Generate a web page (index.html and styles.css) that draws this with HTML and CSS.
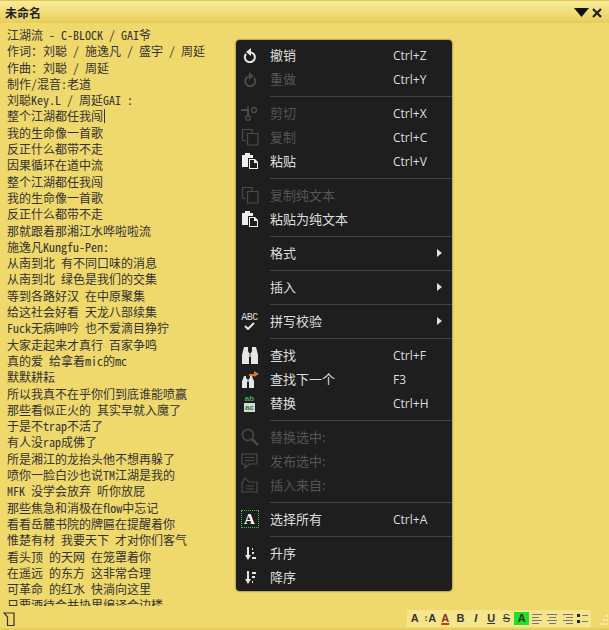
FILE: index.html
```html
<!DOCTYPE html>
<html>
<head>
<meta charset="utf-8">
<title>未命名</title>
<link rel="stylesheet" href="styles.css">
</head>
<body>
<svg class="defs" width="0" height="0">
	<symbol id="i-copy" viewBox="0 0 18 18">
		<path d="M1.500 12V1.500h9.500V5M5 12.500H1.500M6.500 5.500h10.500v11.500H6.500zM6.500 5.500v7" fill="none" stroke="currentColor" stroke-width="1.200"/>
	</symbol>
	<symbol id="i-paste" viewBox="0 0 18 18">
		<path d="M1 3h3V1h5v2h3v3H7v9H1z" fill="currentColor"/>
		<path d="M8 7h6l3 3v7H8z" fill="currentColor"/>
		<path d="M9 8h4v3h3v5H9z" fill="#1e1e1e"/>
	</symbol>
</svg>

<div class="note">
	<div class="titlebar">
		<span class="title">未命名</span>
		<span class="win-btns">
			<svg width="15" height="9" viewBox="0 0 15 9"><path d="M0 0h15L7.500 9z" fill="#111"/></svg>
			<svg width="10" height="10" viewBox="0 0 10 10"><path d="M1 1l8 8M9 1L1 9" stroke="#222" stroke-width="2.200"/></svg>
		</span>
	</div>

	<div class="content">
		<div class="lyrics">
			<div>江湖流 - C-BLOCK / GAI爷</div>
			<div>作词：刘聪 / 施逸凡 / 盛宇 / 周延</div>
			<div>作曲：刘聪 / 周延</div>
			<div>制作/混音:老道</div>
			<div>刘聪Key.L / 周延GAI :</div>
			<div>整个江湖都任我闯<span class="caret"></span></div>
			<div>我的生命像一首歌</div>
			<div>反正什么都带不走</div>
			<div>因果循环在道中流</div>
			<div>整个江湖都任我闯</div>
			<div>我的生命像一首歌</div>
			<div>反正什么都带不走</div>
			<div>那就跟着那湘江水哗啦啦流</div>
			<div>施逸凡Kungfu-Pen:</div>
			<div>从南到北 有不同口味的消息</div>
			<div>从南到北 绿色是我们的交集</div>
			<div>等到各路好汉 在中原聚集</div>
			<div>给这社会好看 天龙八部续集</div>
			<div>Fuck无病呻吟 也不爱滴目狰狞</div>
			<div>大家走起来才真行 百家争鸣</div>
			<div>真的爱 给拿着mic的mc</div>
			<div>默默耕耘</div>
			<div>所以我真不在乎你们到底谁能喷赢</div>
			<div>那些看似正火的 其实早就入魔了</div>
			<div>于是不trap不活了</div>
			<div>有人没rap成佛了</div>
			<div>所是湘江的龙抬头他不想再躲了</div>
			<div>喷你一脸白沙也说TM江湖是我的</div>
			<div>MFK 没学会放弃 听你放屁</div>
			<div>那些焦急和消极在flow中忘记</div>
			<div>看看岳麓书院的牌匾在提醒着你</div>
			<div>惟楚有材 我要天下 才对你们客气</div>
			<div>看头顶 的天网 在笼罩着你</div>
			<div>在遥远 的东方 这非常合理</div>
			<div>可革命 的红水 快淌向这里</div>
			<div>只要酒待会并协里编译合边楼</div>
		</div>

		<div class="menu">
			<div class="item">
				<span class="ico"><svg width="14" height="15" viewBox="0 0 14 15"><path d="M3 6a5 5 0 1 0 4-1.800" fill="none" stroke="#e6e6e6" stroke-width="2"/><path d="M8 0v8L3 4z" fill="#e6e6e6"/></svg></span>
				<span class="label">撤销</span><span class="keys">Ctrl+Z</span>
			</div>
			<div class="item off">
				<span class="ico"><svg width="14" height="15" viewBox="0 0 14 15"><path d="M11 6a5 5 0 1 1-4-1.800" fill="none" stroke="#4a4a4a" stroke-width="2"/><path d="M6 0v8l5-4z" fill="#4a4a4a"/></svg></span>
				<span class="label">重做</span><span class="keys">Ctrl+Y</span>
			</div>
			<div class="sep"></div>
			<div class="item off">
				<span class="ico"><svg width="17" height="16" viewBox="0 0 17 16"><path d="M0 5h8M7 5v6" fill="none" stroke="#4a4a4a" stroke-width="2"/><circle cx="7" cy="13" r="2.300" fill="none" stroke="#4a4a4a" stroke-width="1.400"/><circle cx="13" cy="5" r="2.500" fill="none" stroke="#4a4a4a" stroke-width="1.400"/><path d="M7 1v4" stroke="#4a4a4a" stroke-width="1.400"/></svg></span>
				<span class="label">剪切</span><span class="keys">Ctrl+X</span>
			</div>
			<div class="item off">
				<span class="ico"><svg class="dim" width="18" height="18"><use href="#i-copy"/></svg></span>
				<span class="label">复制</span><span class="keys">Ctrl+C</span>
			</div>
			<div class="item">
				<span class="ico"><svg class="lit" width="18" height="18"><use href="#i-paste"/></svg></span>
				<span class="label">粘贴</span><span class="keys">Ctrl+V</span>
			</div>
			<div class="sep"></div>
			<div class="item off">
				<span class="ico"><svg class="dim" width="18" height="18"><use href="#i-copy"/></svg></span>
				<span class="label">复制纯文本</span>
			</div>
			<div class="item">
				<span class="ico"><svg class="lit" width="18" height="18"><use href="#i-paste"/></svg></span>
				<span class="label">粘贴为纯文本</span>
			</div>
			<div class="sep"></div>
			<div class="item">
				<span class="ico"></span>
				<span class="label">格式</span><span class="arrow"></span>
			</div>
			<div class="sep"></div>
			<div class="item">
				<span class="ico"></span>
				<span class="label">插入</span><span class="arrow"></span>
			</div>
			<div class="sep"></div>
			<div class="item">
				<span class="ico abc"><span>ABC</span><svg width="11" height="8" viewBox="0 0 11 8"><path d="M1 4l3 3 6-6" fill="none" stroke="#e6e6e6" stroke-width="2"/></svg></span>
				<span class="label">拼写校验</span><span class="arrow"></span>
			</div>
			<div class="sep"></div>
			<div class="item">
				<span class="ico"><svg width="18" height="17" viewBox="0 0 18 17"><path d="M3 0h4v4l1 2v11H1V8l1-4zM11 0h4l1 4 1 4v9h-7V6l1-2z" fill="#e6e6e6"/><path d="M8 6h2v4H8z" fill="#9a9a9a"/></svg></span>
				<span class="label">查找</span><span class="keys">Ctrl+F</span>
			</div>
			<div class="item">
				<span class="ico"><svg width="18" height="17" viewBox="0 0 18 17"><path d="M3 5h2v2l1 1v9H1v-7l1-2zM9 5h2l1 3 1 2v7H8V8l1-1z" fill="#e6e6e6"/><path d="M6 8h2v3H6z" fill="#9a9a9a"/><path d="M8 3h5V0l5 3-5 3V5H8z" fill="#d9772e"/></svg></span>
				<span class="label">查找下一个</span><span class="keys">F3</span>
			</div>
			<div class="item">
				<span class="ico replace"><span class="rp-top">ab</span><span class="rp-bot">ac</span></span>
				<span class="label">替换</span><span class="keys">Ctrl+H</span>
			</div>
			<div class="sep"></div>
			<div class="item off">
				<span class="ico"><svg width="18" height="18" viewBox="0 0 18 18"><circle cx="7" cy="7" r="5.500" fill="none" stroke="#4a4a4a" stroke-width="1.500"/><path d="M11 11l6 6" stroke="#4a4a4a" stroke-width="2.500"/></svg></span>
				<span class="label">替换选中:</span>
			</div>
			<div class="item off">
				<span class="ico"><svg width="17" height="17" viewBox="0 0 17 17"><path d="M1 1h15v10H8l-4 4v-4H1zM4 4.500h9M4 7.500h9" fill="none" stroke="#4a4a4a" stroke-width="1.200"/></svg></span>
				<span class="label">发布选中:</span>
			</div>
			<div class="item off">
				<span class="ico"><svg width="17" height="16" viewBox="0 0 17 16"><path d="M1 15V6l3-5 4 4h8v10zM5 9h8M5 12h8" fill="none" stroke="#4a4a4a" stroke-width="1.200"/></svg></span>
				<span class="label">插入来自:</span>
			</div>
			<div class="sep"></div>
			<div class="item">
				<span class="ico"><span class="select-a">A</span></span>
				<span class="label">选择所有</span><span class="keys">Ctrl+A</span>
			</div>
			<div class="sep"></div>
			<div class="item">
				<span class="ico"><svg width="12" height="13" viewBox="0 0 12 13"><path d="M3 0h2v8h2l-3 5-3-5h2zM8 1h1v2H8zM8 5h2v2H8zM8 10h4v2H8z" fill="#e6e6e6"/></svg></span>
				<span class="label">升序</span>
			</div>
			<div class="item">
				<span class="ico"><svg width="12" height="13" viewBox="0 0 12 13"><path d="M3 0h2v8h2l-3 5-3-5h2zM8 1h4v2H8zM8 5h3v2H8zM8 10h1v2H8z" fill="#e6e6e6"/></svg></span>
				<span class="label">降序</span>
			</div>
		</div>
	</div>

	<div class="footer">
		<svg class="new-note" width="12" height="15" viewBox="0 0 12 15"><path d="M4.500 1H11v12.500H4.500V5L1 1h3.500" fill="none" stroke="#333" stroke-width="1.200"/></svg>
		<div class="tools">
			<span class="tool">A</span>
			<span class="tool"><span class="updown">↕</span>A</span>
			<span class="tool red">A</span>
			<span class="tool">B</span>
			<span class="tool ital">I</span>
			<span class="tool under">U</span>
			<span class="tool strike">S</span>
			<span class="tool hl">A</span>
			<span class="tool"><span class="lines left"><i></i><i></i><i></i><i></i></span></span>
			<span class="tool"><span class="lines mid"><i></i><i></i><i></i><i></i></span></span>
			<span class="tool"><span class="lines right"><i></i><i></i><i></i><i></i></span></span>
			<span class="tool"><svg width="11" height="9" viewBox="0 0 11 9"><path d="M0 0h3v3H0zM0 6h3v3H0z" fill="#222"/><path d="M5 1h6v1H5zM5 7h6v1H5z" fill="#777"/></svg></span>
		</div>
		<svg class="grip" width="10" height="12" viewBox="0 0 10 12"><path d="M8 0h2v2H8zM5 4h2v2H5zM8 4h2v2H8zM2 8h2v2H2zM5 8h2v2H5zM8 8h2v2H8z" fill="#f8eeb0"/></svg>
	</div>
</div>
</body>
</html>
```

FILE: styles.css
```css
body {
	margin: 0;
	background: #efd86c;
}
.defs {
	position: absolute;
}
.note {
	width: 609px;
	height: 630px;
	display: flex;
	flex-direction: column;
	background: #efd86c;
	font-family: "Noto Sans CJK SC", sans-serif;
	overflow: hidden;
}

.titlebar {
	height: 23px;
	flex: none;
	box-sizing: border-box;
	display: flex;
	align-items: center;
	justify-content: space-between;
	padding: 1px 6px 0 5px;
	border-top: 1px solid #e6c64e;
	background: linear-gradient(#f8ec9c, #e9cd58);
}
.title {
	font-size: 12px;
	font-weight: 700;
	color: #222;
}
.win-btns {
	display: flex;
	align-items: center;
	gap: 3px;
	padding-right: 1px;
}

.content {
	flex: 1;
	position: relative;
	overflow: hidden;
}
.lyrics {
	padding: 4px 0 0 7px;
	font-size: 12px;
	line-height: 16.3px;
	font-feature-settings: "hwid";
	color: #333;
	white-space: nowrap;
}
.caret {
	display: inline-block;
	width: 1px;
	height: 14px;
	margin-left: 1px;
	vertical-align: -2px;
	background: #333;
}

.menu {
	position: absolute;
	left: 236px;
	top: 17px;
	width: 216px;
	height: 551px;
	box-sizing: border-box;
	padding: 4px 0;
	border-radius: 4px;
	background: #1e1e1e;
	box-shadow: 0 0 2px #3a3310;
	color: #dedede;
	font-size: 13px;
}
.item {
	height: 24px;
	box-sizing: border-box;
	display: grid;
	grid-template-columns: 28px 123px 1fr;
	align-items: center;
	padding: 0 0 2px 6px;
}
.item.off {
	color: #555;
}
.label {
	padding-bottom: 2px;
}
.ico {
	display: flex;
	flex-direction: column;
	align-items: center;
	justify-content: center;
	width: 17px;
	margin-left: -1px;
	line-height: 0;
}
.dim {
	color: #4a4a4a;
}
.lit {
	color: #eee;
}
.keys {
	font-family: "Open Sans", sans-serif;
	font-size: 12px;
	color: #dedede;
}
.arrow {
	width: 0;
	height: 0;
	margin-left: 44px;
	border-left: 5px solid #dedede;
	border-top: 4px solid transparent;
	border-bottom: 4px solid transparent;
}
.sep {
	height: 1px;
	margin: 4px 0 5px 34px;
	background: #444;
}
.abc span {
	font-family: "Liberation Mono", monospace;
	font-size: 10px;
	line-height: 9px;
	letter-spacing: -0.5px;
}
.replace {
	font-family: "Liberation Sans", sans-serif;
	font-size: 8px;
	font-weight: 700;
	line-height: 9px;
}
.rp-top {
	color: #43b04f;
}
.rp-bot {
	padding: 0 1px;
	background: #d9d9d9;
	color: #2b7d38;
}
.select-a {
	box-sizing: border-box;
	width: 18px;
	height: 18px;
	border: 1px dotted #3bc24a;
	font-family: "Liberation Serif", serif;
	font-size: 15px;
	font-weight: 700;
	line-height: 16px;
	text-align: center;
	color: #fff;
}

.footer {
	height: 24px;
	flex: none;
	display: flex;
	align-items: flex-end;
	padding: 0 1px 1px 3px;
	border-bottom: 2px solid #e9cd58;
	box-sizing: border-box;
}
.tools {
	display: flex;
	margin-left: 392px;
	height: 17px;
	background: #f5e58c;
	font-family: "Liberation Sans", sans-serif;
	font-size: 11px;
	font-weight: 700;
	color: #333;
}
.tool {
	width: 15.3px;
	display: flex;
	align-items: center;
	justify-content: center;
	line-height: 1;
}
.updown {
	font-size: 9px;
	font-weight: 400;
}
.red {
	text-decoration: underline;
	text-decoration-color: #c8381c;
	text-decoration-thickness: 2px;
	color: #8a3018;
}
.ital {
	font-style: italic;
}
.under {
	text-decoration: underline;
}
.strike {
	text-decoration: line-through;
	font-weight: 400;
}
.hl {
	height: 13px;
	align-self: center;
	background: #22e02a;
}
.lines {
	width: 10px;
	display: flex;
	flex-direction: column;
	gap: 2px;
}
.lines i {
	display: block;
	width: 10px;
	height: 1px;
	background: #777;
}
.lines i:nth-child(even) {
	width: 7px;
}
.lines.mid {
	align-items: center;
}
.lines.right {
	align-items: flex-end;
}
.grip {
	margin-left: 7px;
}
```
